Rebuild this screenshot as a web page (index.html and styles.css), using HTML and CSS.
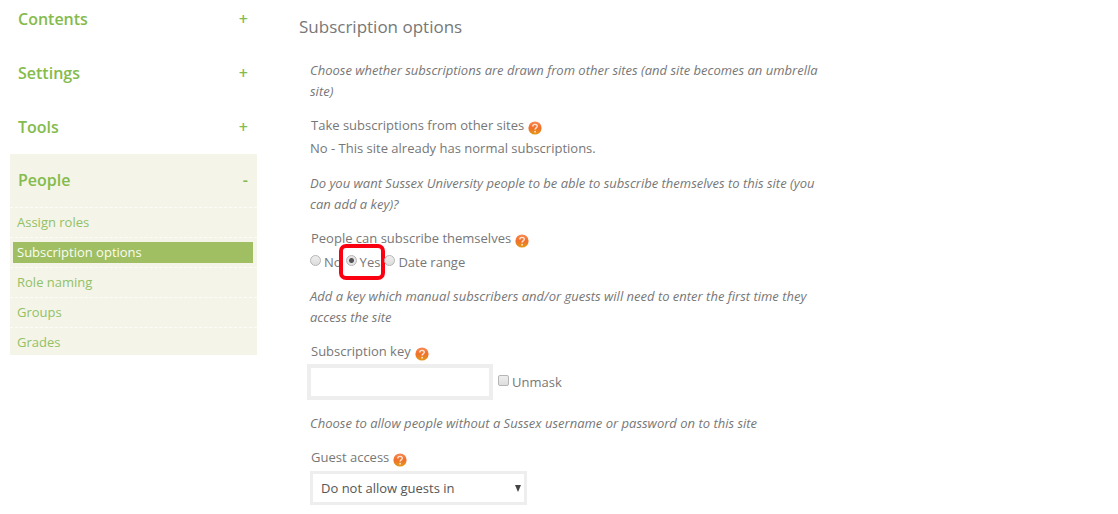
FILE: index.html
```html
<!DOCTYPE html>
<html lang="en">
<head>
<meta charset="utf-8">
<title>Subscription options</title>
<link rel="stylesheet" href="styles.css">
</head>
<body>
<svg class="defs" width="0" height="0" aria-hidden="true">
  <defs>
    <linearGradient id="orange" x1="0" y1="0" x2="0" y2="1">
      <stop offset="0" stop-color="#f98a55"/>
      <stop offset="0.5" stop-color="#f0702a"/>
      <stop offset="1" stop-color="#e39a18"/>
    </linearGradient>
    <symbol id="help" viewBox="0 0 14 14">
      <circle cx="7" cy="7" r="6.6" fill="url(#orange)"/>
      <path d="M4.8 5.4C4.8 2.7 9.4 2.8 9.3 5.3C9.2 6.9 7.1 6.9 7.1 8.6" fill="none" stroke="#ffe6d4" stroke-width="1.4"/>
      <circle cx="7.1" cy="10.7" r="0.9" fill="#ffe6d4"/>
    </symbol>
  </defs>
</svg>
<div class="page">
  <nav class="sidebar">
    <button class="section" type="button" aria-expanded="false"><span>Contents</span><span>+</span></button>
    <button class="section" type="button" aria-expanded="false"><span>Settings</span><span>+</span></button>
    <button class="section" type="button" aria-expanded="false"><span>Tools</span><span>+</span></button>
    <div class="panel">
      <button class="section" type="button" aria-expanded="true"><span>People</span><span>-</span></button>
      <ul class="links">
        <li><a href="#">Assign roles</a></li>
        <li><a class="current" href="#">Subscription options</a></li>
        <li><a href="#">Role naming</a></li>
        <li><a href="#">Groups</a></li>
        <li><a href="#">Grades</a></li>
      </ul>
    </div>
  </nav>
  <main class="content">
    <h1>Subscription options</h1>
    <form class="form">
      <section class="group">
        <p class="hint">Choose whether subscriptions are drawn from other sites (and site becomes an umbrella site)</p>
        <div class="label">Take subscriptions from other sites <svg class="help"><use href="#help"/></svg></div>
        <div class="value">No - This site already has normal subscriptions.</div>
      </section>
      <section class="group">
        <p class="hint">Do you want Sussex University people to be able to subscribe themselves to this site (you can add a key)?</p>
        <div class="label" id="self">People can subscribe themselves <svg class="help"><use href="#help"/></svg></div>
        <div class="value radios" role="radiogroup" aria-labelledby="self">
          <label class="option"><input type="radio" name="self">No</label>
          <label class="option marked"><input type="radio" name="self" checked>Yes</label>
          <label class="option"><input type="radio" name="self">Date range</label>
        </div>
      </section>
      <section class="group">
        <p class="hint">Add a key which manual subscribers and/or guests will need to enter the first time they access the site</p>
        <div class="label"><label for="key">Subscription key</label> <svg class="help"><use href="#help"/></svg></div>
        <div class="key-row">
          <input class="key" id="key" type="password">
          <label class="option"><input type="checkbox">Unmask</label>
        </div>
      </section>
      <section class="group">
        <p class="hint">Choose to allow people without a Sussex username or password on to this site</p>
        <div class="label"><label for="guest">Guest access</label> <svg class="help"><use href="#help"/></svg></div>
        <div class="select">
          <select id="guest"><option>Do not allow guests in</option></select>
          <svg class="arrow" viewBox="0 0 6 7"><path d="M0 0H6L3 7Z"/></svg>
        </div>
      </section>
    </form>
  </main>
</div>
</body>
</html>
```
FILE: styles.css
```css
* {
  box-sizing: border-box;
}

body {
  margin: 0;
  background: #fff;
  color: #777;
  font: 13px/21px "Open Sans", "Noto Sans", sans-serif;
}

button, input, select {
  font: inherit;
  color: inherit;
}

.defs {
  position: absolute;
}

.page {
  display: grid;
  grid-template-columns: 247px minmax(0, 520px);
  column-gap: 42px;
  padding: 0 10px;
}

.sidebar {
  margin-top: -8px;
}

.section {
  display: flex;
  justify-content: space-between;
  align-items: center;
  width: 100%;
  height: 54px;
  padding: 0 9px 0 8px;
  border: 0;
  background: none;
  color: #84bb4c;
  font-size: 16px;
  font-weight: 600;
  text-align: left;
}

.panel {
  background: #f4f4e9;
}

.panel .section {
  height: 53px;
}

.links {
  margin: 0;
  padding: 0;
  list-style: none;
}

.links li {
  padding: 4px 4px 4px 3px;
  border-top: 1px dashed #fdfdf8;
}

.links li:last-child {
  padding-bottom: 2px;
}

.links a {
  display: block;
  padding: 0 4px;
  color: #92c166;
  text-decoration: none;
}

.links .current {
  background: #9fbf62;
  color: #fafcf2;
}

h1 {
  margin: 0;
  padding: 15px 0 21px;
  font-size: 17px;
  line-height: 24px;
  font-weight: 400;
}

.form {
  display: grid;
  gap: 13px;
  padding-left: 11px;
}

.hint {
  margin: 0 0 11px;
  font-style: italic;
}

.label {
  display: flex;
  align-items: center;
  gap: 4px;
  height: 24px;
  padding-left: 1px;
}

.help {
  width: 14px;
  height: 14px;
  margin-top: 5px;
}

.value {
  height: 22px;
  margin-top: 1px;
}

.radios {
  display: flex;
  gap: 4px;
}

.option {
  display: flex;
  align-items: center;
  gap: 3px;
  position: relative;
}

.option input {
  appearance: none;
  width: 11px;
  height: 11px;
  margin: 0 0 3px;
  border: 1px solid #b5b5b5;
  background: linear-gradient(#eee, #ddd);
}

.option input[type="radio"] {
  border-radius: 50%;
}

.option input[type="radio"]:checked {
  background: radial-gradient(circle, #555 0 2px, #e4e4e4 3px);
}

.option input[type="checkbox"] {
  border-radius: 2px;
}

.marked::after {
  content: "";
  position: absolute;
  inset: -7px -5px -7px -7px;
  border: 4px solid #fb0010;
  border-radius: 7px;
}

.key-row {
  display: flex;
  align-items: center;
  gap: 5px;
  margin: 1px 0 0 -3px;
}

.key {
  width: 186px;
  height: 36px;
  padding: 4px 8px;
  border: 4px solid #eee;
  background: #fff;
}

.select {
  position: relative;
  width: 217px;
  margin-top: 2px;
}

select {
  appearance: none;
  width: 100%;
  height: 34px;
  padding: 0 8px;
  border: 3px solid #eee;
  background: #fff;
  color: #555;
}

.arrow {
  position: absolute;
  right: 6px;
  top: 14px;
  width: 6px;
  height: 7px;
  fill: #444;
  pointer-events: none;
}
```
